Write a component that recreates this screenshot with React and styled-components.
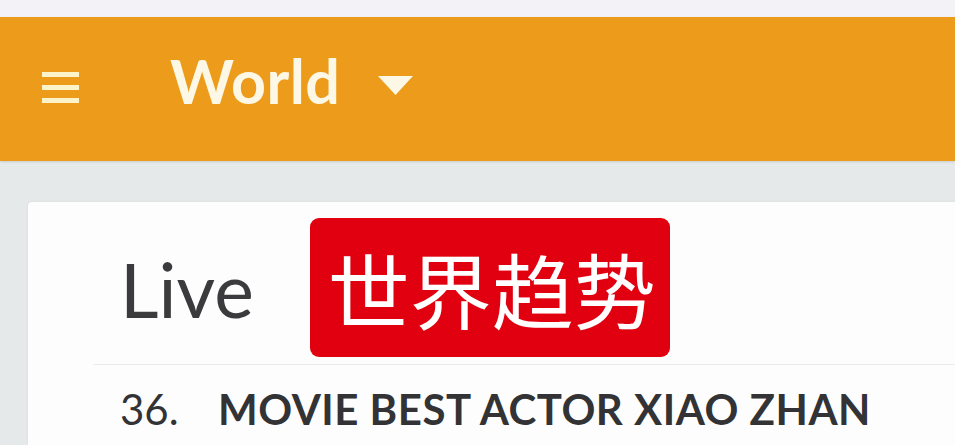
import React from 'react';
import styled, { createGlobalStyle } from 'styled-components';

const GlobalStyle = createGlobalStyle`
  html, body {
    margin: 0;
    padding: 0;
    background: #e5e9ea;
    font-family: Lato, "Noto Sans", "Noto Sans CJK SC", sans-serif;
    overflow: hidden;
  }
`;

const Page = styled.div`
  width: 955px;
  height: 445px;
  display: flex;
  flex-direction: column;
  background: #e5e9ea;
`;

const TopStrip = styled.div`
  height: 17px;
  background: #f3f3f7;
  flex-shrink: 0;
`;

const AppBar = styled.header`
  height: 144px;
  flex-shrink: 0;
  background: #ec9c1a;
  display: flex;
  align-items: center;
  padding-left: 42px;
  box-shadow: 0 1px 2px rgba(0, 0, 0, 0.12);
`;

const MenuButton = styled.div`
  width: 37px;
  display: flex;
  flex-direction: column;
  gap: 8px;
  margin-top: -3px;
`;

const MenuBar = styled.span`
  display: block;
  height: 5px;
  background: #fdf3c9;
`;

const Title = styled.h1`
  margin: -18px 0 0 91px;
  font-family: Lato, sans-serif;
  font-weight: 700;
  font-size: 61px;
  color: #fdf7e6;
  letter-spacing: 0.5px;
  line-height: 1;
`;

const Caret = styled.svg`
  margin-left: 38px;
  margin-top: -8px;
`;

const Main = styled.main`
  flex: 1;
  padding: 41px 0 0 28px;
  display: flex;
`;

const Card = styled.section`
  flex: 1;
  background: #fdfdfd;
  border-top-left-radius: 4px;
  box-shadow: 0 0 3px rgba(0, 0, 0, 0.06);
`;

const CardHeader = styled.div`
  margin-left: 65px;
  padding: 16px 0 7px 27px;
  display: flex;
  align-items: center;
  border-bottom: 1px solid #ebebeb;
`;

const Live = styled.span`
  font-family: Lato, sans-serif;
  font-size: 75px;
  font-weight: 400;
  color: #3b3b3d;
  line-height: 1;
  margin-top: 3px;
`;

const Badge = styled.span`
  margin-left: 56px;
  height: 139px;
  padding: 0 14px 0 18px;
  display: flex;
  align-items: center;
  background: #e1000f;
  border-radius: 9px;
  color: #fff;
  font-family: "Noto Sans CJK SC", sans-serif;
  font-size: 82px;
  line-height: 1;
`;

const Row = styled.div`
  margin-left: 92px;
  padding-top: 23px;
  display: flex;
  align-items: baseline;
  color: #333335;
  font-family: Lato, sans-serif;
  font-size: 42px;
  line-height: 1;
  white-space: nowrap;
`;

const Rank = styled.span`
  width: 98px;
  font-weight: 400;
`;

const RowTitle = styled.span`
  font-weight: 700;
  letter-spacing: 0.5px;
`;

export default function App() {
  return (
    <>
      <GlobalStyle />
      <Page>
        <TopStrip />
        <AppBar>
          <MenuButton>
            <MenuBar />
            <MenuBar />
            <MenuBar />
          </MenuButton>
          <Title>World</Title>
          <Caret width="35" height="19" viewBox="0 0 35 19">
            <path d="M0 0 H35 L17.5 19 Z" fill="#fdf7e6" />
          </Caret>
        </AppBar>
        <Main>
          <Card>
            <CardHeader>
              <Live>Live</Live>
              <Badge>世界趋势</Badge>
            </CardHeader>
            <Row>
              <Rank>36.</Rank>
              <RowTitle>MOVIE BEST ACTOR XIAO ZHAN</RowTitle>
            </Row>
          </Card>
        </Main>
      </Page>
    </>
  );
}
